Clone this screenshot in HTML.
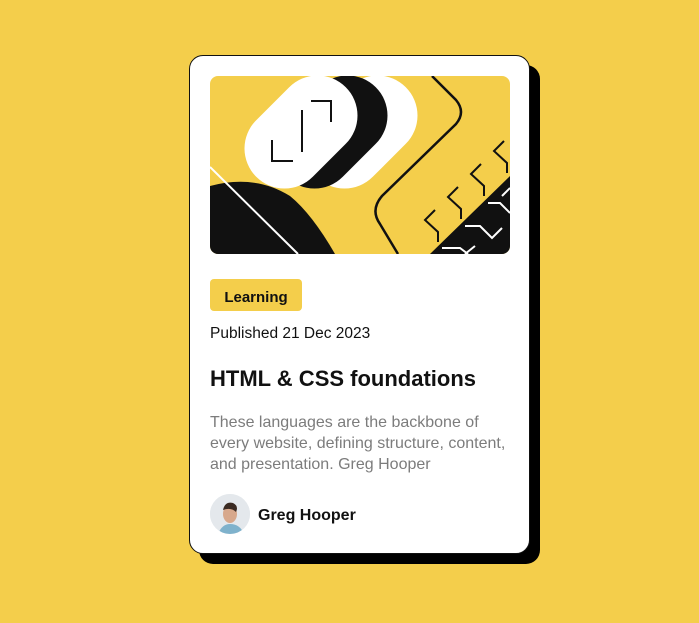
<!DOCTYPE html>
<html><head><meta charset="utf-8"><style>
html,body{margin:0;padding:0}
body{width:699px;height:623px;background:#f4ce4b;position:relative;overflow:hidden;font-family:"Liberation Sans",sans-serif}
.card{position:absolute;left:189px;top:55px;width:339px;height:497px;background:#fff;border:1px solid #111;border-radius:14px;box-shadow:10px 10px 0 #000}
.img{position:absolute;left:20px;top:20px;width:300px;height:178px;border-radius:8px;overflow:hidden}
.badge{position:absolute;left:20px;top:223px;width:92px;height:32px;background:#f4ce4b;border-radius:4px;font-weight:bold;font-size:15px;line-height:37px;text-align:center;color:#111;box-sizing:border-box;height:32px;overflow:hidden}
.pub{position:absolute;left:20px;top:269px;font-size:15.5px;color:#111}
h1{position:absolute;left:20px;top:310px;margin:0;font-size:22px;font-weight:bold;color:#111}
.desc{position:absolute;left:20px;top:356px;width:300px;font-size:16px;line-height:21px;color:#7c7c7c}
.av{position:absolute;left:20px;top:438px;width:40px;height:40px;border-radius:50%;overflow:hidden;background:#e6ebee}
.name{position:absolute;left:68px;top:451px;font-size:16px;font-weight:bold;color:#111}
</style></head><body>
<div class="card">
<div class="img">
<svg width="300" height="178" viewBox="0 0 300 178">
<rect width="300" height="178" fill="#f4ce4b"/>
<line x1="134.5" y1="72.5" x2="167.5" y2="39.5" stroke="#fff" stroke-width="80" stroke-linecap="round"/>
<line x1="104.5" y1="72.5" x2="137.5" y2="39.5" stroke="#111" stroke-width="80" stroke-linecap="round"/>
<line x1="74.5" y1="72.5" x2="107.5" y2="39.5" stroke="#fff" stroke-width="80" stroke-linecap="round"/>
<path d="M101,25 H121 V46" fill="none" stroke="#111" stroke-width="2"/>
<path d="M92,34 V76" fill="none" stroke="#111" stroke-width="2"/>
<path d="M62,64 V85 H83" fill="none" stroke="#111" stroke-width="2"/>
<path d="M0,110 Q45,98 80,120 Q102,138 125,178 L0,178 Z" fill="#111"/>
<line x1="0" y1="91" x2="88" y2="178" stroke="#fff" stroke-width="2"/>
<path d="M222,0 L246,24 Q256,36 246,48 L172,120 Q160,134 170,148 L188,178" fill="none" stroke="#111" stroke-width="2.5"/>
<path d="M220,178 L300,100 L300,178 Z" fill="#111"/>
<g fill="none" stroke="#111" stroke-width="2">
<path d="M225,134 L215,144 L228,156 L228,166"/>
<path d="M248,111 L238,121 L251,133 L251,143"/>
<path d="M271,88 L261,98 L274,110 L274,120"/>
<path d="M294,65 L284,75 L297,87 L297,97"/>
</g>
<g fill="none" stroke="#fff" stroke-width="2">
<path d="M232,172 L250,172 L258,178"/>
<path d="M255,150 L270,150 L282,162 L292,152"/>
<path d="M278,127 L290,127 L300,137"/>
<path d="M300,112 L292,120"/>
<path d="M255,178 L265,170"/>
</g>
</svg>
</div>
<div class="badge">Learning</div>
<div class="pub">Published 21 Dec 2023</div>
<h1>HTML &amp; CSS foundations</h1>
<div class="desc">These languages are the backbone of every website, defining structure, content, and presentation. Greg Hooper</div>
<div class="av"><svg width="40" height="40"><rect width="40" height="40" fill="#e4e8ec"/><path d="M8,40 Q12,30 20,30 Q30,30 34,40Z" fill="#7fb2cc"/><ellipse cx="20" cy="20" rx="7" ry="9" fill="#d7a88c"/><path d="M13,16 Q15,7 23,9 Q29,12 26,18 Q21,13 13,16Z" fill="#3a2a22"/></svg></div>
<div class="name">Greg Hooper</div>
</div>
</body></html>
